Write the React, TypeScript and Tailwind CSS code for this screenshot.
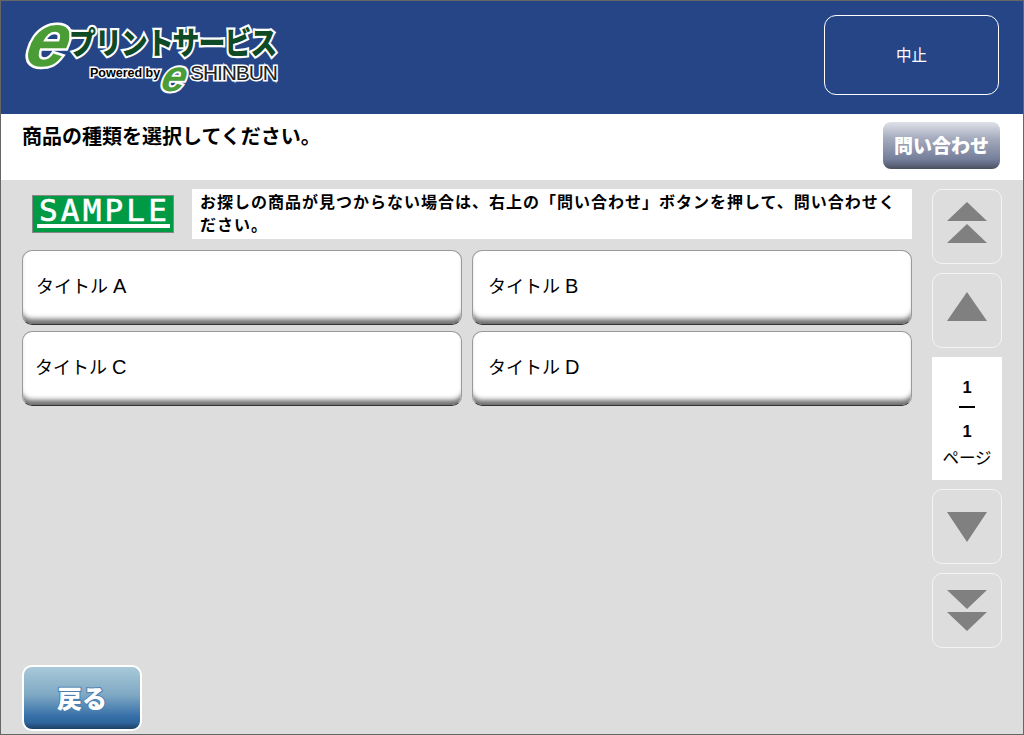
const jp = "font-['Noto_Sans_CJK_JP','Noto_Sans',sans-serif]";

const Triangle = ({ up, size }: { up: boolean; size: 'big' | 'small' }) => (
  <svg
    width="40"
    height={size === 'big' ? 30 : 20}
    viewBox={size === 'big' ? '0 0 40 30' : '0 0 40 20'}
    className="block"
  >
    {size === 'big' ? (
      <polygon points={up ? '20,0 40,29 0,29' : '0,0 40,0 20,30'} fill="#808080" />
    ) : (
      <polygon points={up ? '20,0 40,19 0,19' : '0,0 40,0 20,19'} fill="#808080" />
    )}
  </svg>
);

const SideButton = ({ children, lift }: { children: React.ReactNode; lift?: boolean }) => (
  <div className={`w-[70px] h-[75px] rounded-[10px] border border-[#f4f4f4] flex flex-col items-center justify-center ${lift ? 'pb-[8px]' : ''}`}>
    {children}
  </div>
);

const titles = [
  { kana: 'タイトル', letter: 'A', pad: 'pl-[13px]' },
  { kana: 'タイトル', letter: 'B', pad: 'pl-[15px]' },
  { kana: 'タイトル', letter: 'C', pad: 'pl-[12px]' },
  { kana: 'タイトル', letter: 'D', pad: 'pl-[15px]' },
];

const Logo = () => (
  <div className="relative w-[260px] h-[72px]">
    <span className="absolute left-[4px] top-[-11px] inline-block -skew-x-[14deg] font-['Liberation_Sans',sans-serif] font-bold italic text-[76px] leading-[60px] text-[#4a9c37] [-webkit-text-stroke:5px_#ffffff] [paint-order:stroke]">
      e
    </span>
    <span className={`absolute left-[44px] top-[3px] origin-top-left scale-y-[1.12] ${jp} font-black text-[27px] leading-[32px] tracking-[-1.1px] whitespace-nowrap text-[#0d4a25] [-webkit-text-stroke:4px_#ffffff] [paint-order:stroke]`}>
      プリントサービス
    </span>
    <span className="absolute left-[65px] top-[44px] font-['Liberation_Sans',sans-serif] font-bold text-[12.5px] leading-[16px] whitespace-nowrap text-black [-webkit-text-stroke:3px_#ffffff] [paint-order:stroke]">
      Powered by
    </span>
    <span className="absolute left-[138px] top-[33px] inline-block -skew-x-[14deg] font-['Liberation_Sans',sans-serif] font-bold italic text-[44px] leading-[44px] text-[#4a9c37] [-webkit-text-stroke:4px_#ffffff] [paint-order:stroke]">
      e
    </span>
    <span className="absolute left-[165px] top-[40px] font-['Liberation_Sans',sans-serif] text-[21px] leading-[24px] tracking-[-1.1px] whitespace-nowrap text-[#222222] [-webkit-text-stroke:3px_#ffffff] [paint-order:stroke]">
      SHINBUN
    </span>
  </div>
);

export default function App() {
  return (
    <div className={`w-[1024px] h-[735px] border border-[#666666] flex flex-col overflow-hidden text-black ${jp}`}>
      <header className="h-[113px] shrink-0 bg-[#254587] flex justify-between pt-[14px] pl-[24px] pr-[24px]">
        <div className="pt-[6px]">
          <Logo />
        </div>
        <div className="w-[175px] h-[80px] rounded-[12px] border border-white flex items-center justify-center text-white text-[15.5px]">
          中止
        </div>
      </header>

      <div className="h-[66px] shrink-0 bg-white flex justify-between pl-[21px] pr-[23px]">
        <div className="text-[20px] font-bold leading-[28px] pt-[8px] whitespace-nowrap">
          商品の種類を選択してください。
        </div>
        <div className="mt-[8px] w-[117px] h-[47px] rounded-[8px] bg-[linear-gradient(to_bottom,#dfe1e8_0%,#a5abbd_35%,#747e99_80%,#5f6880_90%,#4a4f5c_100%)] flex items-center justify-center text-white font-black text-[19px]">
          問い合わせ
        </div>
      </div>

      <main className="flex-1 bg-[#dddddd] flex justify-between pl-[21px] pr-[21px] relative">
        <div className="w-[890px] flex flex-col">
          <div className="flex items-start pt-[9px]">
            <div className="mt-[6px] ml-[10px] w-[142px] h-[38px] bg-[#009a44] border border-[#888888] flex flex-col items-center px-[4px]">
              <span className="font-['DejaVu_Sans_Mono',monospace] text-white text-[31px] leading-[28px] tracking-[3.2px] pl-[3px] whitespace-nowrap [-webkit-text-stroke:0.6px_#ffffff]">
                SAMPLE
              </span>
              <span className="w-[133px] h-[4px] bg-white"></span>
            </div>
            <div className="ml-[18px] w-[720px] h-[50px] bg-white pl-[8px] pt-[1px] text-[16px] font-bold leading-[23px] tracking-[1px]">
              お探しの商品が見つからない場合は、右上の「問い合わせ」ボタンを押して、問い合わせください。
            </div>
          </div>

          <div className="grid grid-cols-2 gap-x-[10px] gap-y-[6px] mt-[11px]">
            {titles.map((title) => (
              <div
                key={title.letter}
                className={`h-[75px] rounded-[10px] bg-white border border-[#999999] border-b-[#333333] shadow-[inset_0_-8px_5px_-3px_#707070] flex items-center ${title.pad} pb-[4px]`}
              >
                <span className="text-[18px]">{title.kana}</span>
                <span className="ml-[5px] font-['Liberation_Sans',sans-serif] text-[20px]">{title.letter}</span>
              </div>
            ))}
          </div>

          <div className="mt-auto mb-[3px] w-[120px] h-[66px] rounded-[10px] border-2 border-white bg-[linear-gradient(to_bottom,#a8c9d8_0%,#7fa8c4_45%,#356fa8_80%,#2f659b_90%,#1c3f63_100%)] flex items-center justify-center text-white font-black text-[25px] [-webkit-text-stroke:2px_#4a7fb0] [paint-order:stroke]">
            戻る
          </div>
        </div>

        <aside className="w-[70px] flex flex-col gap-[9px] pt-[9px]">
          <SideButton lift>
            <Triangle up size="small" />
            <div className="h-[2px]"></div>
            <Triangle up size="small" />
          </SideButton>
          <SideButton lift>
            <Triangle up size="big" />
          </SideButton>
          <div className="h-[123px] bg-white flex flex-col items-center justify-start pt-[20px]">
            <span className="text-[16.5px] font-bold leading-[20px] font-['Liberation_Sans',sans-serif]">1</span>
            <span className="w-[16px] h-[2px] bg-black mt-[9px]"></span>
            <span className="text-[16.5px] font-bold leading-[20px] mt-[13px] font-['Liberation_Sans',sans-serif]">1</span>
            <span className="text-[16.5px] leading-[22px] mt-[5px]">ページ</span>
          </div>
          <SideButton>
            <Triangle up={false} size="big" />
          </SideButton>
          <SideButton>
            <Triangle up={false} size="small" />
            <div className="h-[2px]"></div>
            <Triangle up={false} size="small" />
          </SideButton>
        </aside>
      </main>
    </div>
  );
}
